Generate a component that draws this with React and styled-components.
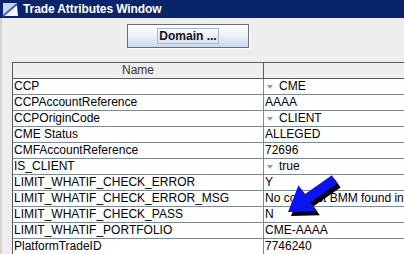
import styled, { createGlobalStyle } from 'styled-components';

const rows = [
    { name: 'CCP', value: 'CME', combo: true },
    { name: 'CCPAccountReference', value: 'AAAA' },
    { name: 'CCPOriginCode', value: 'CLIENT', combo: true },
    { name: 'CME Status', value: 'ALLEGED' },
    { name: 'CMFAccountReference', value: '72696' },
    { name: 'IS_CLIENT', value: 'true', combo: true },
    { name: 'LIMIT_WHATIF_CHECK_ERROR', value: 'Y' },
    { name: 'LIMIT_WHATIF_CHECK_ERROR_MSG', value: 'No contract BMM found in' },
    { name: 'LIMIT_WHATIF_CHECK_PASS', value: 'N' },
    { name: 'LIMIT_WHATIF_PORTFOLIO', value: 'CME-AAAA' },
    { name: 'PlatformTradeID', value: '7746240' },
];

const GlobalStyle = createGlobalStyle`
    html, body {
        margin: 0;
        padding: 0;
        overflow: hidden;
        background: #eeeeee;
    }
    * {
        box-sizing: border-box;
    }
`;

const Frame = styled.div`
    position: relative;
    width: 404px;
    height: 254px;
    overflow: hidden;
    display: flex;
    flex-direction: column;
    font-family: "Liberation Sans", Arial, sans-serif;
`;

const TitleBar = styled.div`
    height: 18px;
    flex: none;
    background: #0a246a;
    display: flex;
    align-items: center;
    padding-left: 2px;
    gap: 4px;
    color: #ffffff;
    font-weight: 700;
    font-size: 12px;
    line-height: 18px;
    letter-spacing: -0.1px;
`;

const Body = styled.div`
    flex: 1;
    border-left: 2px solid #d6d3ce;
    background: #eeeeee;
    display: flex;
    flex-direction: column;
    padding-top: 6px;
`;

const Button = styled.div`
    margin-left: 125px;
    width: 122px;
    height: 24px;
    border: 1px solid #6c6c6c;
    box-shadow: 1px 1px 0 #ffffff;
    background: linear-gradient(#fdfeff, #eef3fa 45%, #cbdaee);
    display: flex;
    align-items: center;
    justify-content: center;
`;

const FocusLabel = styled.span`
    border: 1px solid #a6b9cd;
    padding: 0 1px;
    font-size: 12px;
    font-weight: 700;
    line-height: 14px;
    color: #111111;
`;

const Table = styled.div`
    margin-top: 14px;
    margin-left: 10px;
    width: 480px;
    border-left: 1px solid #5a5a5a;
    border-top: 1px solid #5a5a5a;
`;

const Row = styled.div`
    display: grid;
    grid-template-columns: 251px 1fr;
    height: 16px;
    background: ${p => (p.header ? '#eeeeee' : '#ffffff')};
    border-bottom: 1px solid ${p => (p.header ? '#5a5a5a' : '#7a8a99')};
`;

const Cell = styled.div`
    display: flex;
    align-items: center;
    justify-content: ${p => (p.center ? 'center' : 'flex-start')};
    padding-left: ${p => (p.center ? 0 : 1)}px;
    font-size: 12px;
    line-height: 15px;
    color: ${p => (p.center ? '#333333' : '#000000')};
    white-space: nowrap;
    overflow: hidden;
    border-right: ${p => (p.divider ? `1px solid ${p.dividerColor}` : 'none')};
`;

const ComboArrow = styled.span`
    width: 0;
    height: 0;
    margin: 1px 6px 0 2px;
    border-left: 3px solid transparent;
    border-right: 3px solid transparent;
    border-top: 4px solid #9a9a9a;
`;

const Overlay = styled.svg`
    position: absolute;
    left: 0;
    top: 0;
    pointer-events: none;
`;

// pointer drawn over the table: tip at the origin, tail to the right
const arrowShape = '0,0 24,-16 24,-5 57,-5 57,5 24,5 24,16';

const WindowIcon = () => (
    <svg width="17" height="16" viewBox="0 0 17 16">
        <path d="M1 15 L1 2 L15 2 L15 4 Z" fill="#c9d6ea" />
        <path d="M1 15 L15 4 L16 15 Z" fill="#f4f7fc" />
        <path d="M1 15 L15 3" stroke="#3c64b4" strokeWidth="2" />
    </svg>
);

const App = () => {
    return (
        <Frame>
            <GlobalStyle />
            <TitleBar>
                <WindowIcon />
                <span>Trade Attributes Window</span>
            </TitleBar>
            <Body>
                <Button>
                    <FocusLabel>Domain ...</FocusLabel>
                </Button>
                <Table>
                    <Row header>
                        <Cell center divider dividerColor="#5a5a5a">Name</Cell>
                        <Cell />
                    </Row>
                    {rows.map(row => (
                        <Row key={row.name}>
                            <Cell divider dividerColor="#7a8a99">{row.name}</Cell>
                            <Cell>
                                {row.combo && <ComboArrow />}
                                {row.value}
                            </Cell>
                        </Row>
                    ))}
                </Table>
            </Body>
            <Overlay width="404" height="254">
                <polygon points={arrowShape} fill="#000000" transform="translate(291 216) rotate(-35)" />
                <polygon points={arrowShape} fill="#0a14f0" transform="translate(288 212) rotate(-35)" />
            </Overlay>
        </Frame>
    );
};

export default App;
